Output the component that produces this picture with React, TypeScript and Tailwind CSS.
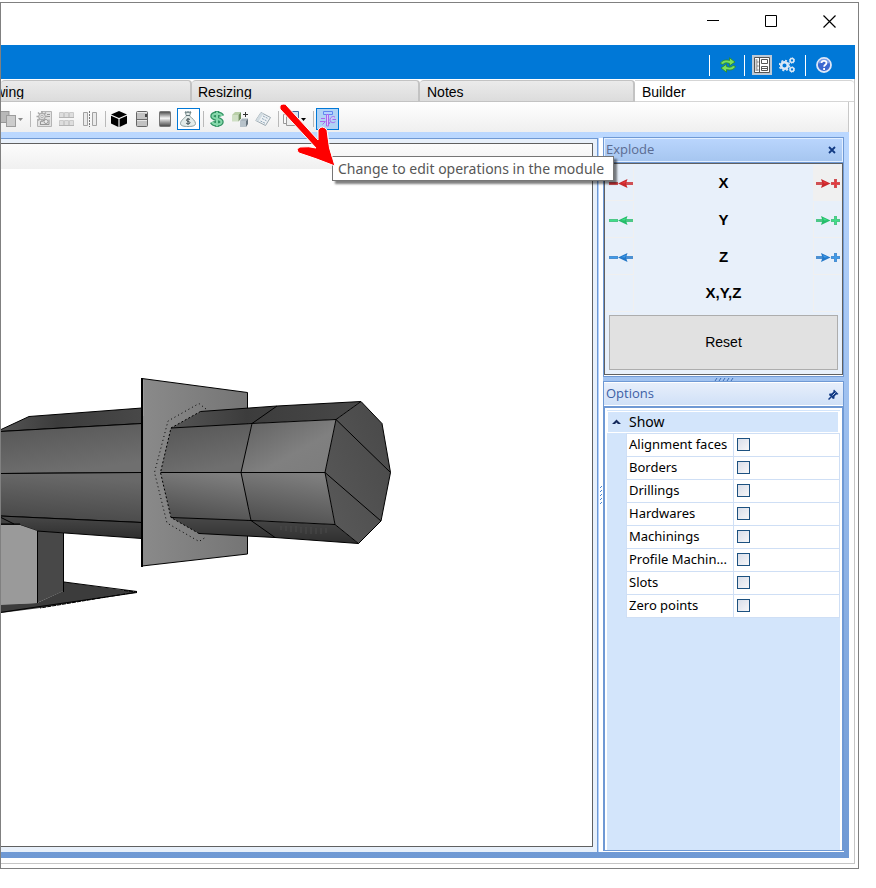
import React from "react";

type Axis = { name: string; color: string; dark: string };

const axes: Axis[] = [
  { name: "X", color: "#e8383c", dark: "#c8282c" },
  { name: "Y", color: "#3fe08a", dark: "#25bd6a" },
  { name: "Z", color: "#3d9cec", dark: "#2478c8" },
];

const options = [
  "Alignment faces",
  "Borders",
  "Drillings",
  "Hardwares",
  "Machinings",
  "Profile Machin...",
  "Slots",
  "Zero points",
];

function ToolButton({ label, children }: { label: string; children: React.ReactNode }) {
  return (
    <button aria-label={label} className="flex h-[22px] w-[23px] shrink-0 items-center justify-start pl-[3px]">
      {children}
    </button>
  );
}

function Separator() {
  return (
    <div className="w-[6px] shrink-0 pl-[3px]">
      <div className="h-4 w-px bg-[#b9b9b9]" />
    </div>
  );
}

function Icon({ children, size = 16 }: { children: React.ReactNode; size?: number }) {
  return (
    <svg width={size} height={size} viewBox={`0 0 ${size} ${size}`} fill="none" aria-hidden="true">
      {children}
    </svg>
  );
}

function Toolbar() {
  return (
    <div className="mr-[5px] flex h-[30px] items-center border-r border-[#c8c8c8] bg-linear-to-b from-white to-[#efefef] pt-1">
      <button aria-label="Arrange" className="flex h-[22px] w-[26px] shrink-0 items-center">
        <svg width="23" height="16" viewBox="0 0 23 16" aria-hidden="true">
          <rect x="-4" y="0.5" width="12" height="11" fill="#b8b8b8" stroke="#989898" />
          <rect x="5.500" y="4.500" width="9" height="11" fill="#cccccc" stroke="#9c9c9c" />
          <path d="M17 7h5l-2.500 3z" fill="#8b8b8b" />
        </svg>
      </button>
      <Separator />
      <ToolButton label="Settings image">
        <Icon>
          <path d="M5 .5h10.500v15h-14V8" stroke="#b4b4b4" fill="#e2e2e2" />
          <path d="M4.500 13.500v-3h2l2-2M11 3.500h3M10 5.500h4M4 13.500h9v-5" stroke="#979797" />
          <path d="M6 0v11M.5 5.500h11M2 1.500l8 8M10 1.500l-8 8" stroke="#a8a8a8" strokeWidth="1.500" />
          <circle cx="6" cy="5.500" r="3.300" fill="#dedede" stroke="#a6a6a6" />
          <circle cx="6" cy="5.500" r="1.200" fill="#f4f4f4" stroke="#b0b0b0" />
          <circle cx="10" cy="10.500" r="2" fill="#eee" stroke="#999" />
        </Icon>
      </ToolButton>
      <ToolButton label="Grid modules">
        <Icon>
          <g fill="#dedede" stroke="#cacaca">
            <path d="M.5 1.500h4v5h-4zM5.500 1.500h4v5h-4zM10.500 1.500h4v5h-4zM.5 9.500h4v5h-4zM5.500 9.500h4v5h-4zM10.500 9.500h4v5h-4z" />
          </g>
          <path d="M0 6.500h15M0 14.500h15" stroke="#b4b4b4" />
        </Icon>
      </ToolButton>
      <ToolButton label="Mirror">
        <Icon>
          <path d="M1.500 1.500h4v13h-4zM10.500 1.500h4v13h-4z" fill="#eaeaea" stroke="#a2a2a2" />
          <path d="M7.500 0v16" stroke="#777" strokeDasharray="2 1" />
        </Icon>
      </ToolButton>
      <Separator />
      <ToolButton label="3D view">
        <Icon>
          <path d="M8 0l8 3.500L8 7 0 3.500zM0 4.700l7.400 3.300V16L0 12.500zM16 4.700L8.600 8v8l7.400-3.500z" fill="#000" />
        </Icon>
      </ToolButton>
      <ToolButton label="Cabinet">
        <Icon>
          <rect x="2.500" y=".5" width="11" height="15" rx="1" fill="#c2c2c2" stroke="#666" />
          <path d="M3 8.500h10" stroke="#6a6a6a" />
          <path d="M3 9.500h10M3 1.500h10" stroke="#e6e6e6" />
          <path d="M11 3h2v3h-2z" fill="#444" />
        </Icon>
      </ToolButton>
      <ToolButton label="Shading">
        <Icon>
          <defs>
            <linearGradient id="shade" x1="0" y1="0" x2="0" y2="1">
              <stop offset="0" stopColor="#444" />
              <stop offset=".45" stopColor="#f6f6f6" />
              <stop offset=".72" stopColor="#999" />
              <stop offset="1" stopColor="#444" />
            </linearGradient>
          </defs>
          <rect x="2.500" y=".5" width="11" height="15" rx="1" fill="url(#shade)" stroke="#777" />
        </Icon>
      </ToolButton>
      <button
        aria-label="Cost"
        aria-pressed="true"
        className="flex h-[22px] w-[23px] shrink-0 items-center justify-start border border-[#0078d7] bg-white pl-[2px]"
      >
        <Icon>
          <path d="M5 1l6 0-1.500 4C12 7 15.500 10 15.500 12.500 15.500 15 12 15.500 8 15.500S.5 15 .5 12.500C.5 10 4 7 6.500 5z" fill="#e3ebe9" stroke="#8a9c9c" />
          <path d="M5 .8l1.500 1L8 .8l1.500 1L11 .8M6 4.500h4" stroke="#61757a" />
          <path d="M10 8.500c-1-.9-3.500-.8-3.500.7 0 1.600 3.500.9 3.500 2.500 0 1.500-2.800 1.500-3.800.5M8 7.200v6.500" stroke="#3f4c50" />
        </Icon>
      </button>
      <Separator />
      <ToolButton label="Price">
        <Icon>
          <path d="M13 5C12 2 3.500 1.800 3.500 5.200 3.500 8.500 12.500 7 12.500 11c0 3.300-8 3-9.500 0M8 0v16" stroke="#2f9160" strokeWidth="4.500" />
          <path d="M13 5C12 2 3.500 1.800 3.500 5.200 3.500 8.500 12.500 7 12.500 11c0 3.300-8 3-9.500 0M8 .8v14.400" stroke="#86d8ab" strokeWidth="2" />
        </Icon>
      </ToolButton>
      <ToolButton label="Add module">
        <Icon>
          <path d="M0 4l3-3h6L6.500 4z" fill="#b9cfa8" />
          <path d="M0 4h6.500v6.500H0z" fill="#cfdfc4" />
          <path d="M6.500 4L9 1v6.500l-2.500 3z" fill="#6d8c5b" />
          <path d="M8 10l2-2.500h6L14 10z" fill="#a9b5be" />
          <path d="M14 10l2-2.500v5.500L14 16z" fill="#66737d" />
          <path d="M8 10h6v6H8z" fill="#b7c2ca" />
          <path d="M13.500 1v5M11 3.500h5" stroke="#333" />
        </Icon>
      </ToolButton>
      <ToolButton label="Report">
        <Icon>
          <path d="M6 1.500l9.500 5L10.500 14.500.8 9.500z" fill="#eef2f5" stroke="#9ba8b0" />
          <path d="M6 1.500C4 4 3 6.500.8 9.500L3.500 10.500 8.500 2.800z" fill="#d2dce2" />
          <path d="M8 5l5 2.500M7 7.500l4.500 2.300M5.500 10l4.500 2.200" stroke="#8fa6b8" strokeDasharray="2 1" />
        </Icon>
      </ToolButton>
      <Separator />
      <button aria-label="Layers" className="flex h-[22px] w-[29px] shrink-0 items-center pl-[2px]">
        <svg width="26" height="16" viewBox="0 0 26 16" aria-hidden="true">
          <path d="M5.500.5h10v10h-10z" fill="#d4e1f0" stroke="#446a9b" />
          <path d="M.5 3.500h10v9H.5z" fill="#f8f8f8" stroke="#999" />
          <path d="M3.500 5.500h10v9h-10z" fill="#eee" stroke="#999" />
          <path d="M18 7h5l-2.500 3z" fill="#000" />
        </svg>
      </button>
      <Separator />
      <button
        aria-label="Change to edit operations in the module"
        aria-pressed="true"
        className="flex h-[22px] w-[23px] shrink-0 items-center justify-center border border-[#0078d7] bg-[#b1d3f5]"
      >
        <Icon>
          <path d="M3.500.5h9v3h-9z" fill="#b4d2ff" stroke="#6287ee" />
          <path d="M6.500 3.500h2V15h-2z" fill="#e2c6ff" stroke="#a868ec" />
          <path d="M1 7.500h4M0 10.500h5M2.500 13.500l3-3" stroke="#a868ec" />
          <path d="M15 6c-2.500-1-5 .3-5 2.800s3 3.700 5.300 2M12.500 8.500H16M10 11l-1 2" stroke="#a565ee" />
          <path d="M11.200 8.500c0-1.500 1.500-2 3-1.600" stroke="#e2c6ff" />
        </Icon>
      </button>
    </div>
  );
}

function Tab({ label, className }: { label: string; className: string }) {
  return (
    <button
      role="tab"
      className={`flex shrink-0 items-start rounded-t-sm border-t border-r-2 border-b border-[#c3c3c3] bg-linear-to-b from-[#ebebeb] to-[#dcdcdc] pt-[3px] ${className}`}
    >
      <span className="block h-[15px] overflow-hidden leading-4">{label}</span>
    </button>
  );
}

function Model() {
  return (
    <svg className="block h-[460px] w-[591px] shrink-0" viewBox="1 169 591 460" aria-label="3D model view" role="img">
      <defs>
        <linearGradient id="top" x1="0" y1="0" x2="1" y2="0">
          <stop offset="0" stopColor="#555" />
          <stop offset=".4" stopColor="#3c3c3c" />
          <stop offset="1" stopColor="#484848" />
        </linearGradient>
        <linearGradient id="up" x1="0" y1="0" x2=".4" y2="1">
          <stop offset="0" stopColor="#555" />
          <stop offset="1" stopColor="#6f6f6f" />
        </linearGradient>
        <linearGradient id="low" x1=".2" y1="0" x2="0" y2="1">
          <stop offset="0" stopColor="#696969" />
          <stop offset="1" stopColor="#454545" />
        </linearGradient>
        <linearGradient id="base" x1="0" y1="0" x2="0" y2="1">
          <stop offset="0" stopColor="#484848" />
          <stop offset="1" stopColor="#2e2e2e" />
        </linearGradient>
        <linearGradient id="plate" x1="0" y1="0" x2="1" y2="0">
          <stop offset="0" stopColor="#8a8a8a" />
          <stop offset="1" stopColor="#757575" />
        </linearGradient>
        <linearGradient id="hi" x1="0" y1="0" x2="1" y2="1">
          <stop offset="0" stopColor="#606060" />
          <stop offset=".6" stopColor="#808080" />
          <stop offset="1" stopColor="#7c7c7c" />
        </linearGradient>
        <linearGradient id="lo" x1=".6" y1="0" x2=".3" y2="1">
          <stop offset="0" stopColor="#7f7f7f" />
          <stop offset="1" stopColor="#4d4d4d" />
        </linearGradient>
        <linearGradient id="cap" x1="0" y1="1" x2="1" y2="0">
          <stop offset="0" stopColor="#5a5a5a" />
          <stop offset="1" stopColor="#484848" />
        </linearGradient>
      </defs>
      <g strokeWidth="1" stroke="#000" strokeLinejoin="round">
        <path d="M64 582L137 592L40 608L0 613V604L37 603L63 591z" fill="#3c3c3c" stroke="none" />
        <path d="M64 582L137 591.500M137 592.500L40 606.500L0 612.500" fill="none" strokeWidth="1" />
        <path d="M124 590.500L137 592L40 608" fill="none" strokeDasharray="4 1" />
        <path d="M37 530L63.500 533V591L37 603z" fill="#484848" stroke="none" />
        <path d="M63.500 533V592" />
        <path d="M0 430L29 416.500L142 408V423.500L0 431.500z" fill="url(#top)" />
        <path d="M0 431.500L142 423.500V472.500L0 473.500z" fill="url(#up)" />
        <path d="M0 473.500L142 472.500V522.500L0 516z" fill="url(#low)" />
        <path d="M0 516L142 522.500V538.500L37 531L20 525H0z" fill="url(#base)" />
        <path d="M0 525H20L37.500 531V603L0 605z" fill="#9a9a9a" stroke="none" />
        <path d="M0 524H20M0 517L14 524M37.500 531V603" fill="none" />
        <path d="M142 378.500L247.500 392.500V554L142 566z" fill="url(#plate)" />
        <path d="M142 378V567" strokeWidth="2" />
        <path d="M143.500 380V416" stroke="#999" />
        <path d="M206 409L199 403.500L168 421L154.500 472.500L167 523L199 541.500L206 537" fill="none" strokeDasharray="1 3" />
        <path d="M200.500 411.500L277 406L361 401.500L336 419.500L252 423.500L171 428z" fill="url(#top)" stroke="none" />
        <path d="M171 428L252 423.500L241 472.500H160.500z" fill="url(#up)" stroke="none" />
        <path d="M252 423.500L336 419.500L325 472.500H241z" fill="url(#hi)" stroke="none" />
        <path d="M160.500 472.500H241L251 520.500L171 517.500z" fill="url(#lo)" stroke="none" />
        <path d="M241 472.500H325L335 524.500L251 520.500z" fill="url(#lo)" stroke="none" />
        <path d="M171 517.500L251 520.500L335 524.500L358.500 543.500L275 537.500L199 533.500z" fill="url(#base)" stroke="none" />
        <path d="M361 401.500L382 423.500L390.500 472.500L381 521L358.500 543.500L335 524.500L325 472.500L336 419.500z" fill="url(#cap)" />
        <path
          d="M200.500 411.500L277 406L361 401.500M171 428L252 423.500L336 419.500M160.500 472.500H325M171 517.500L251 520.500L335 524.500M199 533.500L275 537.500L358.500 543.500M277 406L252 423.500L241 472.500L251 520.500L275 537.500M336 419.500L390.500 472.500M325 472.500L381 521"
          fill="none"
        />
        <path d="M200.500 411.500L171 428L160.500 472.500L171 517.500L199 533.500" fill="none" strokeDasharray="2 2" />
        <path
          d="M281 526v4M286 526v5M291 526v6M296 526v6M301 527v6M306 527v7M311 527v7M316 528v6M321 528v6M326 528v5"
          stroke="#4b4b4b"
        />
      </g>
    </svg>
  );
}

function ArrowButton({ axis, direction }: { axis: Axis; direction: "in" | "out" }) {
  return (
    <button
      aria-label={`${axis.name} ${direction}`}
      className={`flex h-9 w-[29px] items-center border-b border-[#f0f0f0] pt-px ${
        direction === "in"
          ? "justify-end border-r"
          : axis.name === "X"
            ? "justify-center border-l bg-[#f0f0f0]"
            : "justify-center border-l"
      }`}
    >
      <svg width="24" height="10" viewBox="0 0 24 10" aria-hidden="true">
        {direction === "in" ? (
          <g fill={axis.dark}>
            <path d="M0 4h9v3H0zM16 4h8v3h-8z" opacity=".8" />
            <path d="M9 5.500L18.500 1 17 5.500l1.500 4.500z" />
            <path d="M1 5h7v1H1zM12 5.300L17 3l-1 2.500z" fill={axis.color} />
          </g>
        ) : (
          <g fill={axis.dark}>
            <path d="M0 4h8v3H0zM15 4h9v3h-9zM18 1h3v9h-3z" opacity=".8" />
            <path d="M14.500 5.500L5 1l1.500 4.500L5 10z" />
            <path d="M16 5h7v1h-7zM19 2h1v7h-1zM12 5.300L7 3l1 2.500z" fill={axis.color} />
          </g>
        )}
      </svg>
    </button>
  );
}

function ExplodePanel() {
  return (
    <section className="border border-[#6f99d4] bg-white pb-px">
      <div className="flex h-6 items-center justify-between border border-[#e3efff] bg-linear-to-b from-[#b9d5fd] to-[#a6c6f0] pr-1 pl-px">
        <h2 className="font-['Open_Sans',sans-serif] text-[13px] text-[#5b6c92]">Explode</h2>
        <button aria-label="Close Explode" className="flex size-3 items-center justify-center">
          <svg width="10" height="9" viewBox="0 0 10 9" aria-hidden="true">
            <path d="M2 1l6 6M8 1l-6 6" stroke="#123a83" strokeWidth="1.800" fill="none" />
          </svg>
        </button>
      </div>
      <div className="h-px bg-[#6f99d4]" />
      <div className="border border-[#606060] bg-[#e8f0fa] pb-1">
        {axes.map((axis) => (
          <div key={axis.name} className="flex h-[37px] items-center justify-between text-[15px] font-bold">
            <ArrowButton axis={axis} direction="in" />
            <span className="pt-[2px] font-['Liberation_Sans',sans-serif]">{axis.name}</span>
            <ArrowButton axis={axis} direction="out" />
          </div>
        ))}
        <div className="flex h-[37px] items-center justify-between text-[15px] font-bold">
          <div className="h-9 w-[29px] border-r border-b border-[#f0f0f0]" />
          <span className="font-['Liberation_Sans',sans-serif]">X,Y,Z</span>
          <div className="h-9 w-[29px] border-b border-l border-[#f0f0f0]" />
        </div>
        <div className="px-1 pt-[3px]">
          <button className="block h-[55px] w-full border border-[#adadad] bg-[#e1e1e1] pb-[2px] font-['Liberation_Sans',sans-serif] text-sm">
            Reset
          </button>
        </div>
      </div>
    </section>
  );
}

function OptionsPanel() {
  return (
    <section className="flex min-h-0 flex-1 flex-col border-t border-[#6f99d4] bg-white">
      <div className="flex h-6 shrink-0 items-center justify-between border-x border-[#6f99d4] bg-linear-to-b from-[#e8effb] to-[#cfe0f7] pr-1 pl-[2px] shadow-[inset_0_1px_0_#ffffff,inset_0_-1px_0_#ffffff]">
        <h2 className="font-['Open_Sans',sans-serif] text-[13px] text-[#3c5fa5]">Options</h2>
        <button aria-label="Pin Options" className="flex size-3 items-center justify-center">
          <svg width="11" height="11" viewBox="0 0 11 11" aria-hidden="true">
            <path d="M6 .5L10.500 5l-1.500.8-.8-.3L6.500 7.500V9.500L5 10 1 6l.5-1.500h2L5.500 2.800 5.200 2z" fill="#123a83" />
            <path d="M3 8L.5 10.500" stroke="#123a83" strokeWidth="1.500" />
            <path d="M4.500 6.500l3-3" stroke="#b9cdec" />
          </svg>
        </button>
      </div>
      <div className="flex min-h-0 flex-1 flex-col border-x-2 border-t-2 border-b border-[#6f99d4] px-[2px] pt-[2px]">
        <fieldset className="min-w-0 flex-1 bg-[#d3e5fb] pt-px">
          <div className="flex h-[22px] items-center border border-r-2 border-white pl-1">
            <svg width="9" height="6" viewBox="0 0 9 6" aria-hidden="true">
              <path d="M0 5L4.500.5 9 5H6L4.500 3.500 3 5z" fill="#142a5c" />
            </svg>
            <span className="pl-[8px] text-sm leading-5">Show</span>
          </div>
          <div className="ml-[19px] border-t border-l border-[#cfdff5] bg-white">
            {options.map((name, index) => (
              <div key={name} className="flex h-[23px] border-r border-b border-[#cfdff5]">
                <label
                  htmlFor={`option-${index}`}
                  className="flex w-[107px] shrink-0 items-center border-r border-[#cfdff5] pl-[2px] whitespace-nowrap"
                >
                  {name}
                </label>
                <div className="flex items-start pt-1 pl-[3px]">
                  <input
                    id={`option-${index}`}
                    type="checkbox"
                    className="size-[13px] appearance-none border border-[#1c5180] bg-linear-to-br from-[#d9dee9] to-[#f6f6f8]"
                  />
                </div>
              </div>
            ))}
          </div>
        </fieldset>
      </div>
      <div className="h-px shrink-0 bg-white" />
    </section>
  );
}

export default function App() {
  return (
    <div className="relative h-screen min-h-[680px] w-full bg-white pt-[2px] pr-[17px] pb-[19px] font-['Noto_Sans',sans-serif] text-[13px] text-black">
      <div className="flex h-full flex-col border border-[#808080] pr-[3px] pb-1">
        <header>
          <div className="flex h-[42px] items-start justify-end gap-[45px] pt-3 pr-[19px]">
            <button aria-label="Minimize" className="p-0">
              <svg width="14" height="13" viewBox="0 0 14 13" aria-hidden="true">
                <path d="M1 5.500h12" stroke="#000" />
              </svg>
            </button>
            <button aria-label="Maximize">
              <svg width="13" height="13" viewBox="0 0 13 13" aria-hidden="true">
                <path d="M.5.5h11v11H.5z" stroke="#000" fill="none" />
              </svg>
            </button>
            <button aria-label="Close">
              <svg width="13" height="13" viewBox="0 0 13 13" aria-hidden="true">
                <path d="M.5.5l12 12M12.500.5l-12 12" stroke="#000" strokeWidth="1.200" fill="none" />
              </svg>
            </button>
          </div>
          <div className="flex h-[34px] items-center justify-end bg-[#0078d7] pt-[6px] pr-[23px]">
            <div className="h-[21px] w-px bg-white" />
            <button aria-label="Refresh" className="ml-[10px]">
              <Icon>
                <path d="M.5 6.500C2 3 6 2.500 9.500 3.500V.8L15 5l-5.500 3.800V6.500C7 5.500 4.500 5.500 3 7.500z" fill="#7be05a" stroke="#2c8a26" strokeWidth=".8" />
                <path d="M15.500 9.500C14 13 10 13.500 6.500 12.500v2.700L1 11l5.500-3.800v2.300c2.500 1 5 1 6.500-1z" fill="#7be05a" stroke="#2c8a26" strokeWidth=".8" />
              </Icon>
            </button>
            <div className="ml-2 h-[21px] w-px bg-white" />
            <button aria-label="Panels" className="ml-[7px] flex size-5 items-center justify-center bg-[#bdc9d6]">
              <Icon>
                <path d="M.5.5h15v15H.5z" fill="#fff" stroke="#555" />
                <path d="M5.500 0v16M1.500 3h2M1.500 5h3M1.500 7h2M1.500 9h3M1.500 11h2M1.500 13h3" stroke="#555" />
                <path d="M7.500 2.500h6v4h-6zM7.500 9.500h6v4h-6zM8 11.500h5" stroke="#555" />
              </Icon>
            </button>
            <button aria-label="Settings" className="ml-[7px]">
              <Icon>
                <circle cx="5.500" cy="8.500" r="3.300" stroke="#dce9f6" strokeWidth="2.500" />
                <circle cx="5.500" cy="8.500" r="5" stroke="#dce9f6" strokeWidth="1.500" strokeDasharray="2 1.930" />
                <circle cx="13" cy="3.500" r="1.900" stroke="#dce9f6" strokeWidth="1.500" />
                <circle cx="13" cy="3.500" r="2.700" stroke="#dce9f6" strokeDasharray="1 1.100" />
                <circle cx="13" cy="12.500" r="1.900" stroke="#dce9f6" strokeWidth="1.500" />
                <circle cx="13" cy="12.500" r="2.700" stroke="#dce9f6" strokeDasharray="1 1.100" />
              </Icon>
            </button>
            <div className="ml-[10px] h-[21px] w-px bg-white" />
            <button aria-label="Help" className="ml-[10px]">
              <Icon>
                <circle cx="8" cy="8" r="7" fill="#3b68d0" stroke="#dfe7f7" strokeWidth="1.800" />
                <path d="M3 6a5.500 5.500 0 0 1 10 0" stroke="#7ba0ea" strokeWidth="2" />
                <path d="M5.500 6c.2-3 5-2.800 5 0 0 1.700-2.400 1.700-2.400 3.800M8.100 11v2" stroke="#fff" strokeWidth="1.800" />
              </Icon>
            </button>
          </div>
        </header>
        <div className="flex min-h-0 flex-1 flex-col border-r border-b border-[#c6c6c6] pt-px pb-[5px]">
          <div role="tablist" className="flex h-[22px] shrink-0 font-['Liberation_Sans',sans-serif] text-sm">
            <button
              role="tab"
              className="flex w-[191px] shrink-0 items-start rounded-t-sm border-t border-r-2 border-b border-[#c3c3c3] bg-linear-to-b from-[#ebebeb] to-[#dcdcdc] pt-[3px]"
            >
              <span className="flex h-[15px] w-[23px] justify-end overflow-hidden leading-4">wing</span>
            </button>
            <Tab label="Resizing" className="w-[228px] pl-[6px]" />
            <Tab label="Notes" className="w-[215px] pl-[7px]" />
            <button
              role="tab"
              aria-selected="true"
              className="flex flex-1 items-start rounded-tr-sm border-t border-b border-[#d5d5d5] bg-white pt-[3px] pl-[7px]"
            >
              <span className="block leading-4">Builder</span>
            </button>
          </div>
          <Toolbar />
          <main className="mr-[5px] flex min-h-0 flex-1 bg-linear-to-b from-[#bbd8ff] to-[#6f99d4] pt-[5px] pr-[5px] pb-[6px]">
            <div className="mt-px flex min-w-0 flex-1 flex-col border-t border-r border-[#6f99d4] bg-[#e8f0fa] pt-1 pr-1 pb-[5px]">
              <div className="flex min-h-0 flex-1 flex-col overflow-hidden border-t border-r border-b border-[#606060] bg-white">
                <div className="h-[25px] shrink-0 bg-linear-to-b from-[#fcfcfc] to-[#f0f0f0]" />
                <Model />
              </div>
            </div>
            <div className="mt-px flex w-[5px] shrink-0 items-center border-l border-[#b5d2fb] bg-white">
              <svg width="4" height="18" viewBox="0 0 4 18" aria-hidden="true">
                <path d="M1 2l2-2M1 6l2-2M1 10l2-2M1 14l2-2M1 18l2-2" stroke="#4c86cf" />
              </svg>
            </div>
            <aside className="flex w-[241px] shrink-0 flex-col">
              <ExplodePanel />
              <div className="flex h-1 shrink-0 items-center justify-center">
                <svg width="20" height="3" viewBox="0 0 20 3" aria-hidden="true">
                  <path d="M1 3l2-3M5 3l2-3M9 3l2-3M13 3l2-3M17 3l2-3" stroke="#3b6db5" />
                </svg>
              </div>
              <OptionsPanel />
            </aside>
          </main>
        </div>
      </div>
      <div
        role="tooltip"
        className="absolute top-[156px] left-[332px] flex h-[25px] w-[282px] items-center border border-[#767676] bg-white pl-[5px] text-sm whitespace-nowrap text-[#575757] shadow-[3px_3px_2px_#00000080]"
      >
        Change to edit operations in the module
      </div>
      <svg className="absolute top-[100px] left-[272px]" width="66" height="70" viewBox="272 100 66 70" aria-hidden="true">
        <path
          d="M280 109Q279 104 284 104Q286 104 287 106L318 140L318 130Q322 124 327 130Q328 148 335 166Q315 158 299 153Q295 149 300 147Q309 146 316 148z"
          fill="#fe0000"
          stroke="#fff"
          strokeWidth="1"
        />
      </svg>
    </div>
  );
}
